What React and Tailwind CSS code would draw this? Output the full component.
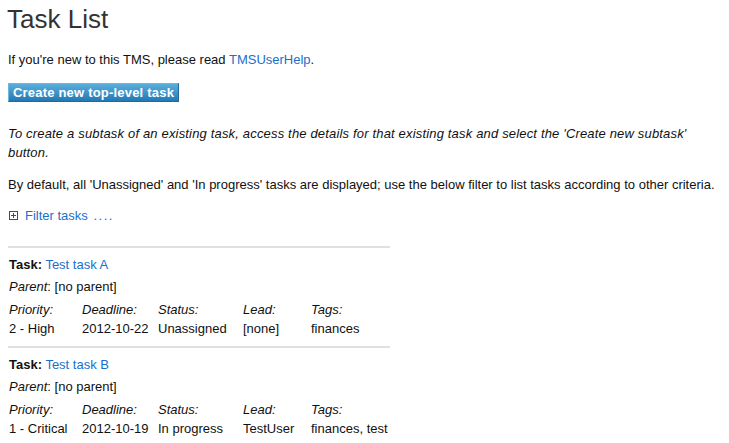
import React from "react";

const tasks = [
  {
    name: "Test task A",
    parent: "[no parent]",
    priority: "2 - High",
    deadline: "2012-10-22",
    status: "Unassigned",
    lead: "[none]",
    tags: "finances",
  },
  {
    name: "Test task B",
    parent: "[no parent]",
    priority: "1 - Critical",
    deadline: "2012-10-19",
    status: "In progress",
    lead: "TestUser",
    tags: "finances, test",
  },
];

const TaskItem = ({ task }) => (
  <div className="w-[382px] border-t-2 border-[#e0e0e0] pt-[7px] pb-[8px]">
    <p className="leading-[19px] pl-[1px]">
      <span className="font-bold">Task:</span>{" "}
      <a href="#" className="text-[#1a6fcc]">
        {task.name}
      </a>
    </p>
    <p className="leading-[19px] mt-[3px] pl-[1px]">
      <span className="italic">Parent</span>: {task.parent}
    </p>
    <div className="grid grid-cols-[73px_76px_85px_68px_1fr] leading-[19px] mt-[4px] pl-[1px]">
      <span className="italic">Priority:</span>
      <span className="italic">Deadline:</span>
      <span className="italic">Status:</span>
      <span className="italic">Lead:</span>
      <span className="italic">Tags:</span>
      <span>{task.priority}</span>
      <span>{task.deadline}</span>
      <span>{task.status}</span>
      <span>{task.lead}</span>
      <span>{task.tags}</span>
    </div>
  </div>
);

const App = () => {
  return (
    <div className="bg-white min-h-[443px] px-[8px] pt-[4px] text-[13px] text-[#111] font-['Liberation_Sans',Arial,sans-serif]">
      <h1 className="text-[26px] leading-[30px] text-[#333] -ml-[1px]">Task List</h1>
      <p className="mt-[16px] leading-[19px]">
        If you're new to this TMS, please read{" "}
        <a href="#" className="text-[#1a6fcc]">
          TMSUserHelp
        </a>
        .
      </p>
      <div className="mt-[14px]">
        <button className="h-[19px] px-[4px] border border-[#1f6a9c] border-t-[#6fb6dd] border-l-[#6fb6dd] bg-gradient-to-b from-[#5aaedc] to-[#2379b3] text-white font-bold text-[13px] tracking-[0.2px] leading-[17px]">
          Create new top-level task
        </button>
      </div>
      <p className="italic mt-[21px] leading-[19px] pr-[8px] tracking-[0.17px]">
        To create a subtask of an existing task, access the details for that existing task and select the 'Create new subtask' button.
      </p>
      <p className="mt-[13px] leading-[19px]">
        By default, all 'Unassigned' and 'In progress' tasks are displayed; use the below filter to list tasks according to other criteria.
      </p>
      <p className="mt-[12px] leading-[19px] flex items-center">
        <svg width="9" height="9" viewBox="0 0 9 9" className="ml-[1px] mr-[7px]">
          <rect x="0.5" y="0.5" width="8" height="8" fill="none" stroke="#2a4f8a" />
          <path d="M2 4.5h5M4.5 2v5" stroke="#2a4f8a" />
        </svg>
        <a href="#" className="text-[#1a6fcc]">
          Filter tasks <span className="ml-[2px] tracking-[1.5px]">....</span>
        </a>
      </p>
      <div className="mt-[21px]">
        {tasks.map((task) => (
          <TaskItem key={task.name} task={task} />
        ))}
      </div>
    </div>
  );
};

export default App;
